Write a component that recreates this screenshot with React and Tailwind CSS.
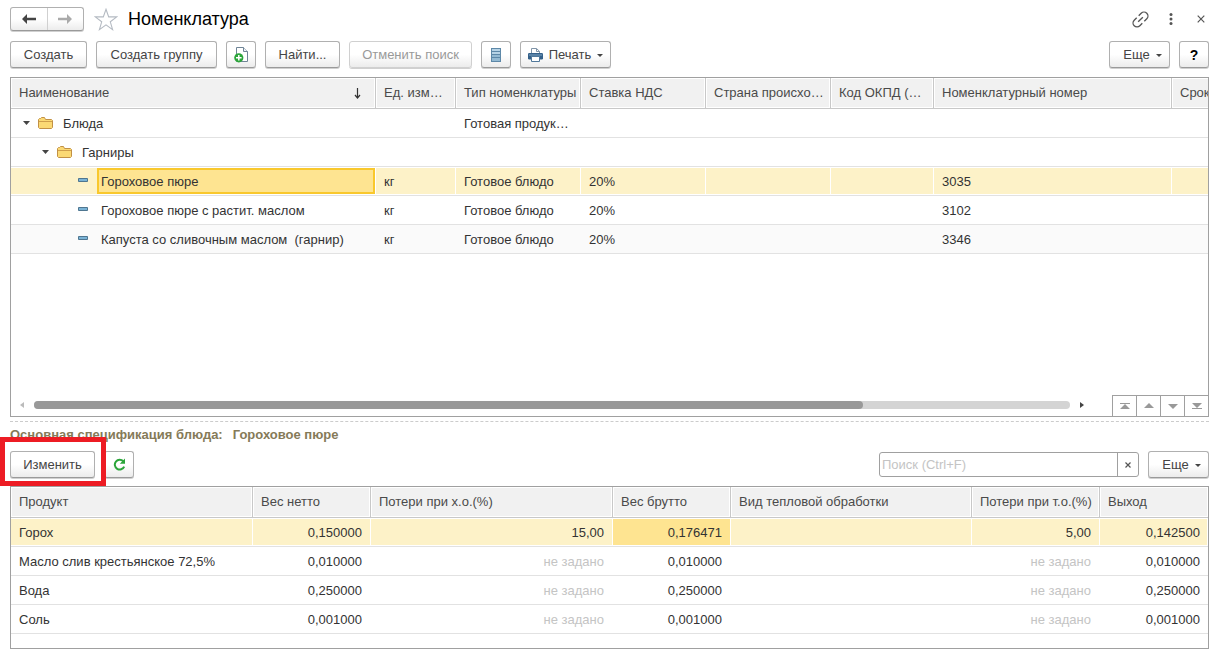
import React, { useState } from 'react';

const nomenclatureColumns = [
  { title: 'Наименование', width: 'w-[365px]', sorted: true },
  { title: 'Ед. изм…', width: 'w-[80px]' },
  { title: 'Тип номенклатуры', width: 'w-[125px]' },
  { title: 'Ставка НДС', width: 'w-[125px]' },
  { title: 'Страна происхо…', width: 'w-[125px]' },
  { title: 'Код ОКПД (…', width: 'w-[103px]' },
  { title: 'Номенклатурный номер', width: 'w-[238px]' },
  { title: 'Срок', width: 'w-[100px]' },
];

const nomenclatureRows = [
  { name: 'Блюда', level: 0, folder: true, type: 'Готовая продук…' },
  { name: 'Гарниры', level: 1, folder: true },
  { name: 'Гороховое пюре', unit: 'кг', type: 'Готовое блюдо', vat: '20%', number: '3035' },
  { name: 'Гороховое пюре с растит. маслом', unit: 'кг', type: 'Готовое блюдо', vat: '20%', number: '3102' },
  { name: 'Капуста со сливочным маслом\u00a0 (гарнир)', unit: 'кг', type: 'Готовое блюдо', vat: '20%', number: '3346', striped: true },
];

const specColumns = [
  { title: 'Продукт', width: '' },
  { title: 'Вес нетто', width: 'w-[118px]' },
  { title: 'Потери при х.о.(%)', width: 'w-[242px]' },
  { title: 'Вес брутто', width: 'w-[118px]' },
  { title: 'Вид тепловой обработки', width: 'w-[241px]' },
  { title: 'Потери при т.о.(%)', width: 'w-[128px]' },
  { title: 'Выход', width: 'w-[108px]' },
];

const specRows = [
  { product: 'Горох', net: '0,150000', cold: '15,00', gross: '0,176471', heat: '5,00', output: '0,142500' },
  { product: 'Масло слив крестьянское 72,5%', net: '0,010000', gross: '0,010000', output: '0,010000' },
  { product: 'Вода', net: '0,250000', gross: '0,250000', output: '0,250000' },
  { product: 'Соль', net: '0,001000', gross: '0,001000', output: '0,001000' },
];

const selectedCell = 'shadow-[inset_-1px_0_#fff,inset_0_1px_#fff,inset_0_-1px_#fff]';

function Button({ className = '', children, ...props }) {
  return (
    <button
      type="button"
      className={`flex h-[27px] shrink-0 items-center justify-center whitespace-nowrap rounded-[3px] border border-[#b0b0b0] border-b-[#9a9a9a] bg-linear-to-b from-white from-50% to-[#ececec] text-[#444] shadow-[0_1px_0_#d0d0d0] disabled:border-[#d0d0d0] disabled:text-[#999] ${className}`}
      {...props}
    >
      {children}
    </button>
  );
}

function Caret() {
  return (
    <svg width="6" height="3" viewBox="0 0 6 3" className="mt-[2px]">
      <path d="M0 0h6L3 3z" fill="#444" />
    </svg>
  );
}

function ArrowIcon({ color, right }) {
  return (
    <svg width="14" height="10" viewBox="0 0 14 10">
      <path
        d={right ? 'M14 5 9 0v3.8H0v2.4h9V10z' : 'M0 5l5-5v3.8h9v2.4H5V10z'}
        fill={color}
      />
    </svg>
  );
}

function StarIcon() {
  return (
    <svg width="24" height="23" viewBox="0 0 24 23" fill="#fff" stroke="#b4bac2" strokeWidth="1.1">
      <path d="M12 1.3l2.7 7.6h8l-6.4 4.9 2.3 7.8-6.6-4.7-6.6 4.7 2.3-7.8L1.3 8.9h8z" />
    </svg>
  );
}

function LinkIcon() {
  return (
    <svg width="17" height="17" viewBox="3 3 18 18" fill="none" stroke="#555" strokeWidth="1.4">
      <g transform="rotate(-45 12 12)">
        <path d="M10.5 16.2H6.8a4.2 4.2 0 0 1 0-8.4h3.7" />
        <path d="M13.5 7.8h3.7a4.2 4.2 0 0 1 0 8.4h-3.7" />
        <path d="M8.5 12h7" />
      </g>
    </svg>
  );
}

function CopyAddIcon() {
  return (
    <svg width="14" height="16" viewBox="0 0 14 16">
      <path d="M2.5.5h7l4 4v10h-11z" fill="#fff" stroke="#6f8496" />
      <path d="M9.5.5v4h4" fill="#eef2f5" stroke="#6f8496" />
      <circle cx="4.8" cy="10.8" r="4.6" fill="#2ba53a" />
      <path d="M4.8 8v5.6M2 10.8h5.6" stroke="#fff" strokeWidth="1.5" />
    </svg>
  );
}

function ListIcon() {
  return (
    <svg width="10" height="14" viewBox="0 0 10 14">
      <path d="M0 0h10v14H0z" fill="#5d88a8" />
      <path d="M1 1h8v2H1zM1 4h8v2H1z" fill="#b6d3e6" />
      <path d="M1 7h8v2H1zM1 10h8v3H1z" fill="#94bad3" />
    </svg>
  );
}

function PrinterIcon() {
  return (
    <svg width="15" height="14" viewBox="0 0 15 14">
      <path d="M3.5 6V.5h5l3 2.8V6" fill="#fff" stroke="#8094a8" />
      <path d="M8.5.5v3h3" fill="none" stroke="#8094a8" />
      <rect x="0" y="5" width="15" height="6.5" rx="1.2" fill="#346089" />
      <path d="M1 7h13" stroke="#7fa5c4" />
      <path d="M3.5 8.5h8v5h-8z" fill="#fff" stroke="#51789b" />
    </svg>
  );
}

function RefreshIcon() {
  return (
    <svg width="13" height="13" viewBox="0 0 13 13">
      <path d="M10.3 3.3A4.9 4.9 0 1 0 11.2 8.6" fill="none" stroke="#2ba53a" strokeWidth="2" />
      <path d="M12 .5v5.3H6.8z" fill="#2ba53a" />
    </svg>
  );
}

function FolderIcon() {
  return (
    <svg width="15" height="12" viewBox="0 0 15 12" stroke="#c29145">
      <path d="M.5 10.5v-8l1-1h1l1-1h3l1 2h6l1 1v7l-1 1h-12z" fill="#fbd974" />
      <path d="M1 4.5h13" fill="none" stroke="#cf9f4c" />
    </svg>
  );
}

function ItemIcon() {
  return (
    <svg width="10" height="4" viewBox="0 0 10 4" className="mb-[3px]">
      <path d="M.5.5h9v3h-9z" fill="#7ab3d6" stroke="#4f7690" />
    </svg>
  );
}

function HeaderRow({ columns }) {
  return (
    <thead>
      <tr>
        {columns.map((column) => (
          <th
            key={column.title}
            scope="col"
            className={`h-[31px] border-b border-r border-[#c8c8c8] bg-[#f1f1f1] py-0 pl-2 pr-0 text-left font-normal whitespace-nowrap text-[#4a4a4a] shadow-[inset_0_0_0_1px_#fff] last:border-r-0 ${column.width}`}
          >
            <div className="flex items-center justify-between">
              <span>{column.title}</span>
              {column.sorted && (
                <svg width="7" height="11" viewBox="0 0 7 11" className="mr-[14px]">
                  <path d="M3.5 0v10M1 7l2.5 3L6 7" fill="none" stroke="#333" strokeWidth="1.2" />
                </svg>
              )}
            </div>
          </th>
        ))}
      </tr>
    </thead>
  );
}

function NameCell({ row, selected }) {
  if (row.folder) {
    return (
      <div className={`flex items-center ${row.level ? 'pl-[31px]' : 'pl-3'}`}>
        <svg width="7" height="4" viewBox="0 0 7 4">
          <path d="M0 0h7L3.5 4z" fill="#444" />
        </svg>
        <span className="ml-2 mr-[10px]"><FolderIcon /></span>
        <span className="pt-px">{row.name}</span>
      </div>
    );
  }
  return (
    <div className="flex items-center pl-[67px]">
      <ItemIcon />
      <div
        className={`ml-[9px] flex h-[26px] flex-1 items-center border-2 pl-[2px] pt-px ${selected ? 'border-[#f9c82d] bg-[#fee491]' : 'border-transparent'}`}
      >
        {row.name}
      </div>
    </div>
  );
}

function NomenclatureTable() {
  const [selected, setSelected] = useState(2);

  return (
    <div className="flex min-h-[340px] flex-1 flex-col border border-[#a0a0a0]">
      <div className="flex-1 overflow-hidden">
        <table className="w-[1261px] min-w-full table-fixed border-separate border-spacing-0">
          <HeaderRow columns={nomenclatureColumns} />
          <tbody>
            {nomenclatureRows.map((row, i) => {
              const isSelected = i === selected;
              const cells = [row.unit, row.type, row.vat, '', '', row.number, ''];
              const background = isSelected ? `bg-[#fdf2c8] ${selectedCell}` : row.striped ? 'bg-[#fafafa]' : '';
              return (
                <tr key={row.name} onClick={() => setSelected(i)}>
                  <td className={`h-[29px] border-b border-[#e2e2e2] p-0 pr-px ${background}`}>
                    <NameCell row={row} selected={isSelected} />
                  </td>
                  {cells.map((cell, j) => (
                    <td key={j} className={`h-[29px] truncate border-b border-[#e2e2e2] px-2 pb-0 pt-[2px] ${background}`}>
                      {cell}
                    </td>
                  ))}
                </tr>
              );
            })}
          </tbody>
        </table>
      </div>

      {/* Scroll bar and list navigation */}
      <div className="flex h-[21px]">
        <div className="flex h-5 flex-1 items-center">
          <svg width="4" height="6" viewBox="0 0 4 6" className="ml-[9px] mr-[10px]">
            <path d="M4 0v6L0 3z" fill="#bbb" />
          </svg>
          <div className="h-2 flex-1 rounded-full bg-[#d4d4d4]">
            <div className="h-2 w-4/5 rounded-full bg-[#999]"></div>
          </div>
          <svg width="4" height="6" viewBox="0 0 4 6" className="ml-[10px] mr-7">
            <path d="M0 0v6l4-3z" fill="#444" />
          </svg>
        </div>
        <div className="flex h-full border-t border-[#a0a0a0]">
          {[
            { label: 'В начало', path: 'M0 0h10v1H0zM5 1l5 5H0z' },
            { label: 'Вверх', path: 'M5 0l5 5H0z' },
            { label: 'Вниз', path: 'M0 1h10L5 6z' },
            { label: 'В конец', path: 'M0 0h10L5 5zM0 5h10v1H0z' },
          ].map((item) => (
            <button
              key={item.label}
              type="button"
              aria-label={item.label}
              className="flex w-6 items-center justify-center border-l border-[#a0a0a0]"
            >
              <svg width="10" height="6" viewBox="0 0 10 6">
                <path d={item.path} fill="#999" />
              </svg>
            </button>
          ))}
        </div>
      </div>
    </div>
  );
}

function SpecificationTable() {
  const [selected, setSelected] = useState(0);

  return (
    <div className="min-h-[163px] border border-[#a0a0a0]">
      <table className="w-full table-fixed border-separate border-spacing-0">
        <HeaderRow columns={specColumns} />
        <tbody>
          {specRows.map((row, i) => {
            const isSelected = i === selected;
            const background = isSelected ? `bg-[#fdf2c8] ${selectedCell}` : '';
            const cell = `h-[29px] truncate border-b border-[#e2e2e2] px-2 pb-0 pt-[2px] ${background}`;
            const number = `text-right pr-[9px]! last:pr-2! ${cell}`;
            const empty = <span className="text-[#c4c4c4]">не задано</span>;
            return (
              <tr key={row.product} onClick={() => setSelected(i)}>
                <td className={cell}>{row.product}</td>
                <td className={number}>{row.net}</td>
                <td className={number}>{row.cold || empty}</td>
                <td className={`${number} ${isSelected ? 'bg-[#fee491]!' : ''}`}>{row.gross}</td>
                <td className={cell}></td>
                <td className={number}>{row.heat || empty}</td>
                <td className={number}>{row.output}</td>
              </tr>
            );
          })}
        </tbody>
      </table>
    </div>
  );
}

function App() {
  const [search, setSearch] = useState('');

  return (
    <div className="flex min-h-screen flex-col bg-white pb-[10px] pl-[10px] pr-[11px] pt-[7px] font-['Liberation_Sans',Arial,sans-serif] text-[13px] leading-4 text-[#333]">
      {/* Title */}
      <header className="flex h-6 items-center">
        <div className="flex h-full w-[74px] rounded-[3px] border border-[#b0b0b0] border-b-[#9a9a9a] bg-linear-to-b from-white from-50% to-[#ececec] shadow-[0_1px_0_#d0d0d0]">
          <button type="button" aria-label="Назад" className="flex flex-1 items-center justify-center border-r border-[#d0d0d0]">
            <ArrowIcon color="#444" />
          </button>
          <button type="button" aria-label="Вперед" className="flex flex-1 items-center justify-center">
            <ArrowIcon color="#aaa" right />
          </button>
        </div>
        <button type="button" aria-label="В избранное" className="ml-[10px]"><StarIcon /></button>
        <h1 className="ml-[10px] text-[18px] leading-6 text-black">Номенклатура</h1>
        <div className="ml-auto flex items-center">
          <button type="button" aria-label="Ссылка"><LinkIcon /></button>
          <button type="button" aria-label="Меню" className="ml-5">
            <svg width="4" height="12" viewBox="0 0 4 12" fill="#555">
              <circle cx="2" cy="1.6" r="1.5" />
              <circle cx="2" cy="6" r="1.5" />
              <circle cx="2" cy="10.4" r="1.5" />
            </svg>
          </button>
          <button type="button" aria-label="Закрыть" className="ml-6 mr-1">
            <svg width="8" height="8" viewBox="0 0 8 8">
              <path d="M.7.7l6.6 6.6M7.3.7L.7 7.3" stroke="#555" strokeWidth="1.2" />
            </svg>
          </button>
        </div>
      </header>

      {/* Toolbar */}
      <div className="mb-[9px] mt-[10px] flex gap-[9px]">
        <Button className="w-[77px]">Создать</Button>
        <Button className="w-[121px]">Создать группу</Button>
        <Button className="w-[30px]" aria-label="Скопировать"><CopyAddIcon /></Button>
        <Button className="w-[75px]">Найти...</Button>
        <Button className="w-[123px]" disabled>Отменить поиск</Button>
        <Button className="w-[30px]" aria-label="Список"><ListIcon /></Button>
        <Button className="w-[91px] gap-[6px]">
          <PrinterIcon />
          <span>Печать</span>
          <Caret />
        </Button>
        <Button className="ml-auto w-[61px] gap-[6px] pl-[6px]">
          <span>Еще</span>
          <Caret />
        </Button>
        <Button className="w-[30px] text-[14px] font-bold text-black!">?</Button>
      </div>

      <NomenclatureTable />

      {/* Specification of the selected dish */}
      <div className="mt-1 border-t border-dashed border-[#ccc]"></div>
      <h2 className="mt-[5px] font-bold text-[#857a58]">
        Основная спецификация блюда:<span className="ml-[10px]">Гороховое пюре</span>
      </h2>

      <div className="mb-2 mt-2 flex gap-[9px]">
        <div className="relative">
          <Button className="w-[85px]">Изменить</Button>
          <div className="pointer-events-none absolute -bottom-2 -left-[10px] -right-[11px] -top-[14px] z-10 border-5 border-[#ed1c24]"></div>
        </div>
        <Button className="w-[30px]" aria-label="Обновить"><RefreshIcon /></Button>
        <div className="ml-auto flex h-[25px] w-[260px] self-center rounded-[3px] border border-[#a0a0a0]">
          <input
            type="text"
            aria-label="Поиск"
            placeholder="Поиск (Ctrl+F)"
            value={search}
            onChange={(e) => setSearch(e.target.value)}
            className="min-w-0 flex-1 px-[2px] outline-none placeholder:text-[#c4c4c4]"
          />
          <button
            type="button"
            aria-label="Очистить"
            onClick={() => setSearch('')}
            className="flex w-[21px] items-center justify-center border-l border-[#a0a0a0]"
          >
            <svg width="6" height="6" viewBox="0 0 6 6">
              <path d="M.5.5l5 5M5.5.5l-5 5" stroke="#555" strokeWidth="1.2" />
            </svg>
          </button>
        </div>
        <Button className="w-[61px] gap-[6px] pl-[6px]">
          <span>Еще</span>
          <Caret />
        </Button>
      </div>

      <SpecificationTable />
    </div>
  );
}

export default App;
